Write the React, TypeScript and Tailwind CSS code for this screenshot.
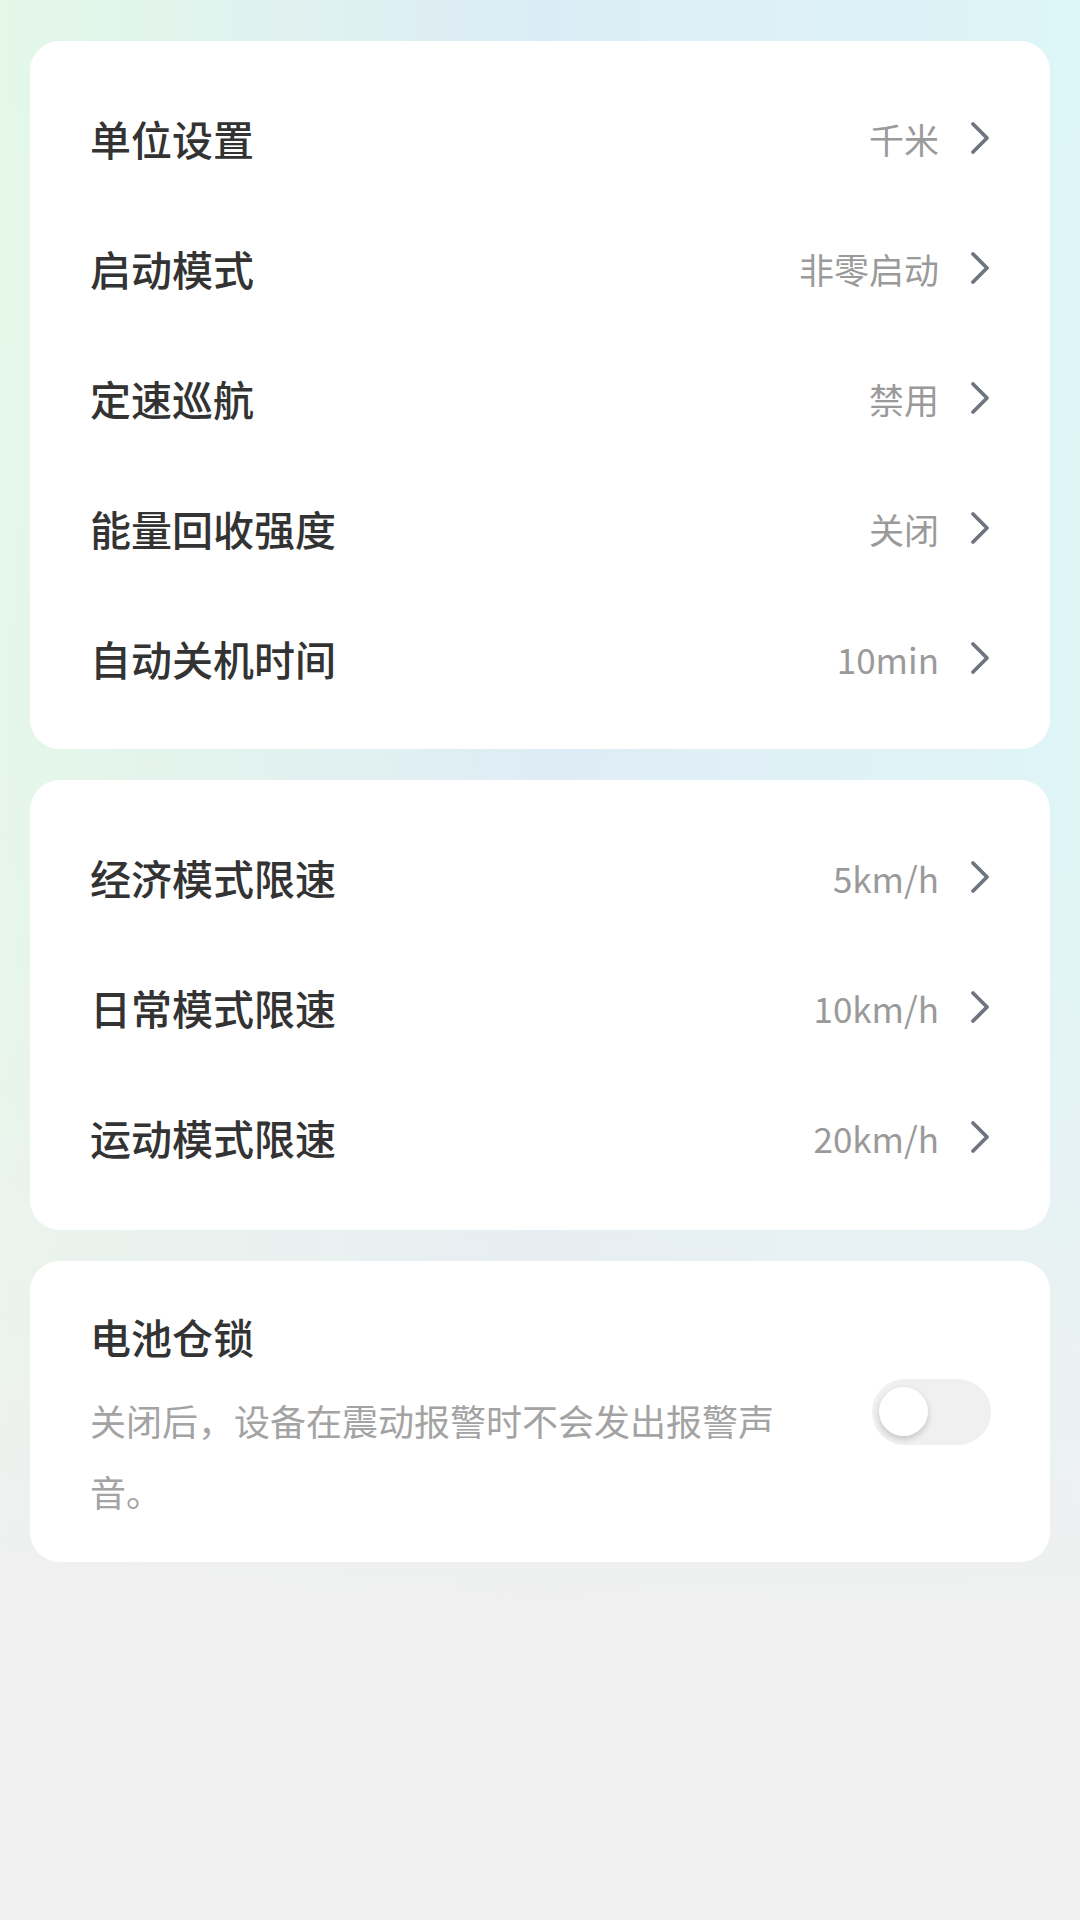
const group1 = [
  { label: '单位设置', value: '千米' },
  { label: '启动模式', value: '非零启动' },
  { label: '定速巡航', value: '禁用' },
  { label: '能量回收强度', value: '关闭' },
  { label: '自动关机时间', value: '10min' },
]

const group2 = [
  { label: '经济模式限速', value: '5km/h' },
  { label: '日常模式限速', value: '10km/h' },
  { label: '运动模式限速', value: '20km/h' },
]

const font = { fontFamily: '"Noto Sans CJK SC", Roboto, sans-serif' }

function Chevron() {
  return (
    <svg viewBox="0 0 20 34" className="ml-[31px] h-[34px] w-[20px]" fill="none">
      <polyline
        points="3,3 17,17 3,31"
        stroke="#6f7580"
        strokeWidth="3.8"
        strokeLinecap="round"
        strokeLinejoin="round"
      />
    </svg>
  )
}

function SettingRow({ label, value }: { label: string; value: string }) {
  return (
    <div className="flex h-[130px] items-center justify-between">
      <span className="text-[41px] font-medium leading-none text-[#333333]">{label}</span>
      <div className="flex items-center">
        <span className="text-[35px] leading-none text-[#9a9a9a]">{value}</span>
        <Chevron />
      </div>
    </div>
  )
}

export default function App() {
  return (
    <div
      className="min-h-[1920px] w-[1080px] bg-[linear-gradient(180deg,rgba(240,240,240,0)_0%,rgba(240,240,240,0.15)_45%,#f0f0f0_85%),linear-gradient(90deg,#e4f8e8_0%,#dcecf6_50%,#ddf6f7_100%)] px-[30px] pt-[41px]"
      style={font}
    >
      {/* Main settings */}
      <div className="rounded-[30px] bg-white px-[60px] pt-[32px] pb-[26px]">
        {group1.map((item) => (
          <SettingRow key={item.label} label={item.label} value={item.value} />
        ))}
      </div>

      {/* Speed limits */}
      <div className="mt-[31px] rounded-[30px] bg-white px-[60px] pt-[32px] pb-[28px]">
        {group2.map((item) => (
          <SettingRow key={item.label} label={item.label} value={item.value} />
        ))}
      </div>

      {/* Battery lock */}
      <div className="mt-[31px] flex items-center rounded-[30px] bg-white pl-[60px] pr-[59px]">
        <div className="mr-[70px] flex-1 pt-[50px] pb-[35px]">
          <div className="text-[41px] font-medium leading-[50px] text-[#333333]">电池仓锁</div>
          <div className="mt-[24px] text-[36px] leading-[71px] text-[#a3a3a3]">
            关闭后，设备在震动报警时不会发出报警声音。
          </div>
        </div>
        <button className="flex h-[66px] w-[119px] items-center rounded-full bg-[#f0f0f0] px-[7px]">
          <span className="h-[49px] w-[49px] rounded-full bg-white shadow-[0_3px_6px_rgba(0,0,0,0.18)]" />
        </button>
      </div>
    </div>
  )
}
